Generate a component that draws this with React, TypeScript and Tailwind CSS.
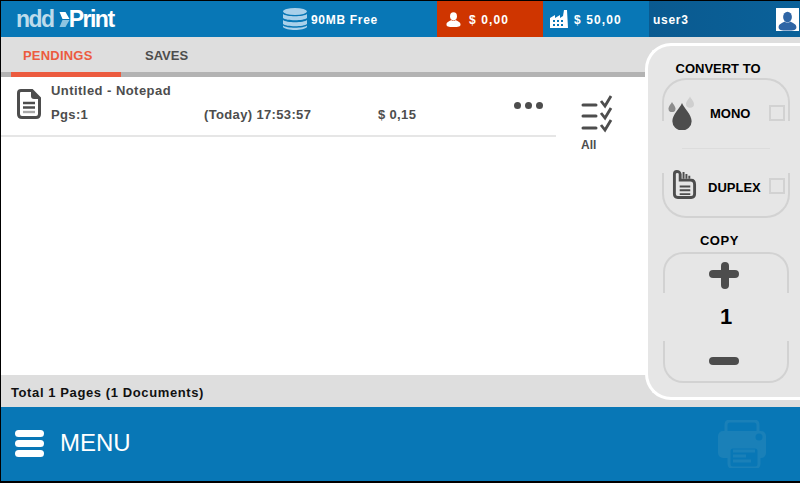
import React from 'react'

function Drop({ className }: { className: string }) {
  return (
    <svg viewBox="0 0 20 28" className={className} fill="currentColor">
      <path d="M10 0 C12 5 20 12 20 19 A10 9.5 0 0 1 0 19 C0 12 8 5 10 0Z" />
    </svg>
  )
}

function PersonIcon({ className }: { className: string }) {
  return (
    <svg viewBox="0 0 16 16" className={className} fill="currentColor">
      <ellipse cx="8" cy="4.6" rx="3.7" ry="4.4" />
      <path d="M5.6 8.4 C6 9.6 10 9.6 10.4 8.4 C12 9.6 15.5 10.4 15.5 13.2 C15.5 15.4 13.5 16 8 16 C2.5 16 .5 15.4 .5 13.2 C.5 10.4 4 9.6 5.6 8.4Z" />
    </svg>
  )
}

function Logo() {
  return (
    <div className="flex items-center font-['Liberation_Sans',sans-serif] font-bold text-[23px] tracking-[-1.5px] leading-none">
      <span className="text-[#bcdbeb]">ndd</span>
      <svg viewBox="0 0 14 16" className="w-[15px] h-[16px] ml-[5px] mt-[1px] shrink-0">
        <path d="M0 0 H6 L10 7 H3Z" fill="#fff" />
        <path d="M3 8 H10 L6 15 H0Z" fill="#8fc4e0" />
      </svg>
      <span className="text-white -ml-[5px]">Print</span>
    </div>
  )
}

function SidePanel() {
  return (
    <div className="absolute left-[644px] top-[42px] w-[155px] h-[357px] bg-[#e6e6e6] border-l-[3px] border-y-[3px] border-white rounded-l-[26px] font-['Liberation_Sans',sans-serif] text-black text-[13px] font-bold">
      <div className="pt-[15px] text-center leading-[16px] pr-[12px]">CONVERT TO</div>
      <div className="relative mt-[1px] ml-[14px] w-[128px] h-[43px] border-x-2 border-t-2 border-[#d2d2d2] rounded-t-[24px]">
        <Drop className="absolute left-[8px] top-[23px] w-[20px] h-[27px] text-[#4d4d4d]" />
        <Drop className="absolute left-[4px] top-[22px] w-[8px] h-[10px] text-[#8c8c8c]" />
        <Drop className="absolute left-[22px] top-[16px] w-[8px] h-[12px] text-[#cfcfcf]" />
        <span className="absolute left-[46px] top-[26px] leading-[16px]">MONO</span>
        <span className="absolute left-[105px] top-[25px] w-[16px] h-[16px] border-2 border-[#d2d2d2]" />
      </div>
      <div className="ml-[34px] w-[88px] mt-[27px] border-t border-[#dcdcdc]" />
      <div className="relative ml-[14px] w-[128px] mt-[24px] h-[45px] border-x-2 border-b-2 border-[#d2d2d2] rounded-b-[24px]">
        <svg viewBox="0 0 26 32" className="absolute left-[8px] top-[-4px] w-[25px] h-[31px]">
          <path fillRule="evenodd" d="M1 5 Q1 1 5 1 Q9 1 10 5 V10 H20 Q25 10 25 16 V26 Q25 31 20 31 H6 Q1 31 1 26Z M4 5 V26 Q4 28 6 28 H20 Q22 28 22 26 V16 Q22 13 19 13 H7 V5 Q7 4 5.500 4 Q4 4 4 5Z" fill="#4d4d4d" />
          <path d="M12 3 V10 M15 5 V10 M18 7 V10" stroke="#4d4d4d" strokeWidth="2" />
          <path d="M8 18 H19 M8 22 H19 M8 26 H19" stroke="#4d4d4d" strokeWidth="2" />
        </svg>
        <span className="absolute left-[44px] top-[7px] leading-[16px]">DUPLEX</span>
        <span className="absolute left-[105px] top-[5px] w-[16px] h-[16px] border-2 border-[#d2d2d2]" />
      </div>
      <div className="mt-[15px] text-center leading-[16px] pr-[9px] tracking-[0.6px]">COPY</div>
      <div className="relative ml-[15px] w-[126px] mt-[3px] h-[41px] border-x-2 border-t-2 border-[#d2d2d2] rounded-t-[20px]">
        <div className="absolute left-[44px] top-[16px] w-[30px] h-[8px] rounded-full bg-[#4d4d4d]" />
        <div className="absolute left-[56px] top-[8px] w-[8px] h-[27px] rounded-full bg-[#4d4d4d]" />
      </div>
      <div className="text-center text-[22px] leading-[48px] h-[48px] pl-[4px]">1</div>
      <div className="relative ml-[15px] w-[126px] h-[42px] border-x-2 border-b-2 border-[#d2d2d2] rounded-b-[20px]">
        <div className="absolute left-[44px] top-[16px] w-[30px] h-[8px] rounded-full bg-[#4d4d4d]" />
      </div>
    </div>
  )
}

export default function App() {
  return (
    <div className="relative w-[800px] h-[483px] overflow-hidden flex flex-col bg-white border-l border-t border-b-2 border-black font-['Liberation_Sans',sans-serif] text-[13px]">
      <header className="h-[36px] shrink-0 flex bg-[#0877b6] text-white font-bold text-[12px]">
        <div className="w-[282px] pl-[15px] flex items-center">
          <Logo />
        </div>
        <div className="w-[154px] flex items-center gap-[4px]">
          <svg viewBox="0 0 24 22" className="w-[24px] h-[22px]" fill="#a9d0ea">
            <ellipse cx="12" cy="3.5" rx="12" ry="3.5" />
            <path d="M0 6 C3 9 21 9 24 6 V10 C21 13 3 13 0 10Z" />
            <path d="M0 12 C3 15 21 15 24 12 V16 C21 19 3 19 0 16Z" />
            <path d="M0 17.5 C3 20.5 21 20.5 24 17.5 V19 C21 23 3 23 0 19Z" />
          </svg>
          <span className="tracking-[0.7px] mt-[2px]">90MB Free</span>
        </div>
        <div className="w-[106px] bg-[#cf3500] flex items-center pl-[9px] gap-[8px]">
          <PersonIcon className="w-[15px] h-[17px]" />
          <span className="tracking-[1.1px] mt-[2px]">$ 0,00</span>
        </div>
        <div className="w-[106px] flex items-center pl-[7px] gap-[6px]">
          <svg viewBox="0 0 18 18" className="w-[18px] h-[18px]" fill="#fff">
            <path d="M0 8 L5 5 V8 L10 5 V8 L13 6 L14 0 H17 L18 18 H0Z" />
            <path d="M3 10 h2 v2 h-2z M7 10 h2 v2 h-2z M11 10 h2 v2 h-2z M3 14 h2 v2 h-2z M7 14 h2 v2 h-2z M11 14 h2 v2 h-2z" fill="#0877b6" />
          </svg>
          <span className="tracking-[1.1px] mt-[2px]">$ 50,00</span>
        </div>
        <div className="flex-1 bg-gradient-to-r from-[#0a5a90] to-[#0a6199] flex items-center pl-[4px] justify-between">
          <span className="tracking-[0.7px] mt-[2px]">user3</span>
          <div className="w-[23px] h-[23px] mr-[1px] bg-white flex items-end justify-center">
            <PersonIcon className="w-[19px] h-[20px] text-[#2f65a5]" />
          </div>
        </div>
      </header>

      <nav className="h-[35px] shrink-0 flex bg-[#dedede] font-bold text-[13px] leading-none">
        <div className="w-[110px] ml-[10px] pl-[12px] pt-[2px] flex items-center text-[#ec5b3f] tracking-[0.2px]">PENDINGS</div>
        <div className="ml-[24px] pt-[2px] flex items-center text-[#4d4d4d]">SAVES</div>
      </nav>
      <div className="h-[5px] shrink-0 bg-[#b3b3b3]">
        <div className="ml-[10px] w-[110px] h-full bg-[#ec5b3f]" />
      </div>

      <main className="flex-1 flex text-[#4d4d4d] font-bold">
        <div className="w-[555px] h-[60px] border-b-2 border-[#e6e6e6] flex pl-[16px]">
          <svg viewBox="0 0 24 30" className="w-[24px] h-[30px] mt-[12px]">
            <path d="M4 1.500 H15 L22.500 9 V25 Q22.500 28.500 19 28.500 H5 Q1.500 28.500 1.500 25 V4 Q1.500 1.500 4 1.500Z" fill="none" stroke="#4d4d4d" strokeWidth="3" />
            <path d="M14 1 L23 10 H17 Q14 10 14 7Z" fill="#4d4d4d" />
            <path d="M6 14 H18 M6 18.500 H18" stroke="#4d4d4d" strokeWidth="2.4" />
            <path d="M6 23 H18" stroke="#a8a8a8" strokeWidth="2.4" />
          </svg>
          <div className="flex-1 pl-[10px] pt-[6px]">
            <div className="leading-[16px] tracking-[0.45px]">Untitled - Notepad</div>
            <div className="relative mt-[8px] leading-[16px] tracking-[0.35px]">
              <span>Pgs:1</span>
              <span className="absolute left-[153px]">(Today) 17:53:57</span>
              <span className="absolute left-[327px]">$ 0,15</span>
              <div className="absolute left-[463px] top-[-5px] flex gap-[4px]">
                <span className="w-[7px] h-[7px] rounded-full bg-[#4d4d4d]" />
                <span className="w-[7px] h-[7px] rounded-full bg-[#4d4d4d]" />
                <span className="w-[7px] h-[7px] rounded-full bg-[#4d4d4d]" />
              </div>
            </div>
          </div>
        </div>
        <div className="ml-[25px] pt-[18px] w-[40px]">
          <svg viewBox="0 0 32 38" className="w-[32px] h-[38px]" fill="none">
            <path d="M2 10 H15 M2 21 H15 M2 33 H15" stroke="#4d4d4d" strokeWidth="3" strokeLinecap="round" />
            <path d="M20 6 L24 11 L30 1 M20 18 L24 23 L30 13 M20 30 L24 35 L30 25" stroke="#4d4d4d" strokeWidth="2.8" />
          </svg>
          <div className="leading-[14px] mt-[5px] text-[12px]">All</div>
        </div>
      </main>

      <div className="h-[32px] shrink-0 bg-[#dedede] pl-[10px] pt-[4px] flex items-center font-bold text-[#111] tracking-[0.6px]">
        Total 1 Pages (1 Documents)
      </div>
      <footer className="h-[74px] shrink-0 bg-[#0877b6] flex items-center pl-[14px] pb-[2px] relative">
        <div className="flex flex-col gap-[3px]">
          <span className="block w-[29px] h-[7px] rounded-full bg-white" />
          <span className="block w-[29px] h-[7px] rounded-full bg-white" />
          <span className="block w-[29px] h-[7px] rounded-full bg-white" />
        </div>
        <span className="ml-[16px] text-white text-[24px] leading-none">MENU</span>
        <svg viewBox="0 0 48 48" className="absolute left-[717px] top-[13px] w-[48px] h-[48px]">
          <path d="M8 11 V5 Q8 1 12 1 H36 Q40 1 40 5 V11" fill="none" stroke="#1a80b8" strokeWidth="3" />
          <rect x="0" y="11" width="48" height="27" rx="5" fill="#1a80b8" />
          <circle cx="41" cy="17" r="3.500" fill="#0877b6" />
          <rect x="11" y="27" width="30" height="21" rx="4" fill="#0877b6" stroke="#1a80b8" strokeWidth="3" />
          <path d="M15 31 H37 M15 36 H28 M15 41 H33" stroke="#1a80b8" strokeWidth="3" />
        </svg>
      </footer>

      <SidePanel />
    </div>
  )
}
